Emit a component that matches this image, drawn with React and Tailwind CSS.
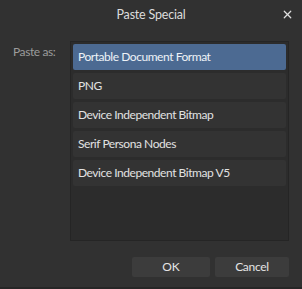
import { X } from 'lucide-react';

const formats = [
  'Portable Document Format',
  'PNG',
  'Device Independent Bitmap',
  'Serif Persona Nodes',
  'Device Independent Bitmap V5',
];

const App = () => {
  return (
    <div
      className="w-[302px] h-[289px] bg-[#313131] text-[#e4e4e4] flex flex-col border-b-2 border-[#262626]"
      style={{ fontFamily: 'Lato, "Open Sans", sans-serif' }}
    >
      <div className="relative h-[30px] flex items-center justify-center text-[12.5px] tracking-[-0.2px] text-[#dcdcdc]">
        Paste Special
        <X className="absolute right-[8px] top-[8px] w-[13px] h-[13px] text-[#e0e0e0]" strokeWidth={2.2} />
      </div>

      <div className="flex pt-[11px]">
        <div className="w-[70px] pl-[13px] pt-[2px] text-[12px] tracking-[-0.4px] text-[#9c9c9c]">Paste as:</div>
        <div className="w-[219px] h-[200px] bg-[#2c2c2c] border border-[#252525] p-[2px] flex flex-col gap-[3px]">
          {formats.map((f, i) => (
            <div
              key={f}
              className={`h-[26px] flex items-center px-[5px] text-[12px] tracking-[-0.45px] rounded-[2px] ${
                i === 0 ? 'bg-[#4c6a92] text-[#eef2f7]' : 'bg-[#333333] text-[#e2e2e2]'
              }`}
            >
              {f}
            </div>
          ))}
        </div>
      </div>

      <div className="flex justify-end gap-[5px] pr-[13px] pt-[16px]">
        <button type="button" className="w-[78px] h-[20px] bg-[#3c3c3c] text-[12px] text-[#e4e4e4] rounded-[2px]">
          OK
        </button>
        <button type="button" className="w-[74px] h-[20px] bg-[#3c3c3c] text-[12px] tracking-[-0.3px] text-[#e4e4e4] rounded-[2px]">
          Cancel
        </button>
      </div>
    </div>
  );
};

export default App;
